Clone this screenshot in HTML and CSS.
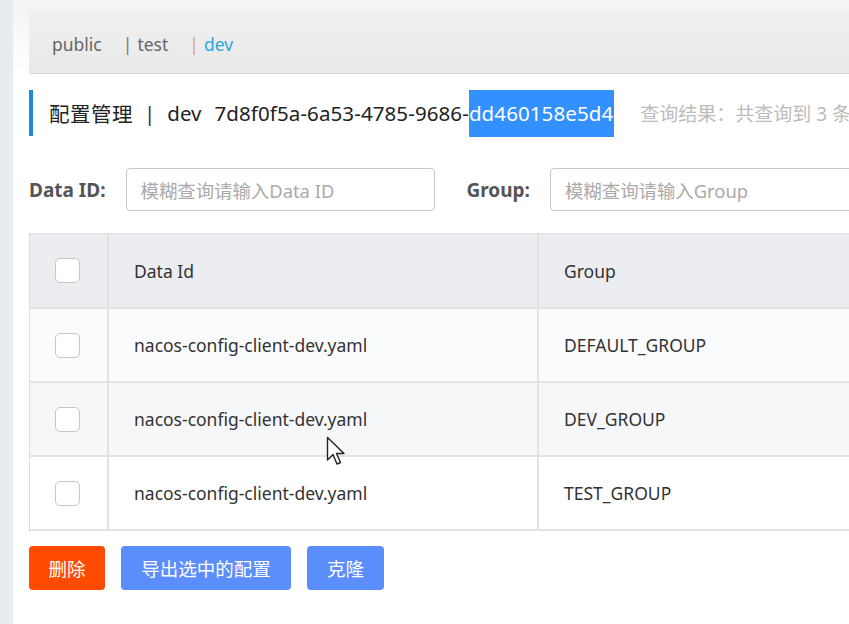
FILE: index.html
```html
<!DOCTYPE html>
<html lang="zh">
<head>
<meta charset="utf-8">
<title>配置管理</title>
<link rel="stylesheet" href="styles.css">
</head>
<body>
<div class="layout">
  <aside class="sidebar"></aside>
  <main class="main">
    <div class="ns-bar">
      <span class="ns-item">public</span>
      <span class="ns-item"><span class="sep">|</span>test</span>
      <span class="ns-item active"><span class="sep sep-active">|</span>dev</span>
    </div>

    <div class="page-title">
      <span class="title-main">配置管理</span>
      <span class="title-sep">|</span>
      <span class="title-ns">dev</span>
      <span class="title-id">7d8f0f5a-6a53-4785-9686-<span class="selected">dd460158e5d4</span></span>
      <span class="title-count">查询结果：共查询到 3 条</span>
    </div>

    <div class="search-row">
      <label class="field-label">Data ID:</label>
      <div class="input input-dataid">模糊查询请输入Data ID</div>
      <label class="field-label group-label">Group:</label>
      <div class="input input-group">模糊查询请输入Group</div>
    </div>

    <div class="table">
      <div class="row head">
        <div class="cell c-check"><span class="checkbox"></span></div>
        <div class="cell c-id">Data Id</div>
        <div class="cell c-group">Group</div>
      </div>
      <div class="row r1">
        <div class="cell c-check"><span class="checkbox"></span></div>
        <div class="cell c-id">nacos-config-client-dev.yaml</div>
        <div class="cell c-group">DEFAULT_GROUP</div>
      </div>
      <div class="row r2">
        <div class="cell c-check"><span class="checkbox"></span></div>
        <div class="cell c-id">nacos-config-client-dev.yaml</div>
        <div class="cell c-group">DEV_GROUP</div>
      </div>
      <div class="row r3">
        <div class="cell c-check"><span class="checkbox"></span></div>
        <div class="cell c-id">nacos-config-client-dev.yaml</div>
        <div class="cell c-group">TEST_GROUP</div>
      </div>
      <svg class="cursor" width="22" height="32" viewBox="0 0 22 32">
        <path d="M1.5 1.5 L1.5 24 L7 18.5 L11 28 L14.5 26.5 L10.5 17.5 L18 17.5 Z" fill="#fff" stroke="#222" stroke-width="1.4" stroke-linejoin="round"/>
      </svg>
    </div>

    <div class="actions">
      <button class="btn btn-danger">删除</button>
      <button class="btn btn-primary">导出选中的配置</button>
      <button class="btn btn-primary btn-clone">克隆</button>
    </div>
  </main>
</div>
</body>
</html>
```

FILE: styles.css
```css
* { box-sizing: border-box; }
html, body {
  margin: 0;
  padding: 0;
  width: 849px;
  height: 624px;
  overflow: hidden;
  background: #fbfbfb;
  font-family: "Noto Sans", "Open Sans", "Noto Sans CJK SC", sans-serif;
  color: #333;
}
.layout {
  display: flex;
  height: 624px;
  overflow: hidden;
}
.sidebar {
  width: 13px;
  flex: none;
  background: #e8ebef;
}
.main {
  flex: 1;
  padding: 10px 0 0 16px;
  background: linear-gradient(#f5f5f5 0, #f5f5f5 10px, #ffffff 74px);
  min-width: 0;
  overflow: hidden;
}
.ns-bar {
  height: 64px;
  background: linear-gradient(#f0f0f0, #e9e9e9);
  border-bottom: 1px solid #d6d6d6;
  display: flex;
  align-items: center;
  padding: 5px 0 0 23px;
  font-size: 17.5px;
  color: #666;
}
.ns-item { margin-right: 21px; }
.sep { color: #777; margin-right: 5px; }
.sep-active { color: #d89f8c; }
.ns-item.active { color: #2fa6dc; }

.page-title {
  margin-top: 16px;
  height: 46px;
  border-left: 4px solid #1a8ccf;
  display: flex;
  align-items: center;
  padding-left: 16px;
  font-size: 20.5px;
  color: #222;
  white-space: nowrap;
}
.title-main { letter-spacing: 0.5px; }
.title-sep { margin: 0 12px 0 11px; color: #333; }
.title-ns { margin-right: 13px; }
.title-id { letter-spacing: 0.1px; }
.selected {
  background: #3390ff;
  color: #fff;
  display: inline-block;
  line-height: 47px;
  padding-right: 1px;
}
.title-count {
  margin-left: 26px;
  font-size: 19px;
  color: #bbb;
}

.search-row {
  margin-top: 32px;
  display: flex;
  align-items: center;
  height: 43px;
  white-space: nowrap;
}
.field-label {
  flex: none;
  font-size: 19px;
  font-weight: bold;
  color: #555;
  margin-right: 20px;
}
.group-label { margin-left: 32px; margin-right: 20px; }
.input {
  flex: none;
  height: 43px;
  border: 1px solid #c9c9c9;
  border-radius: 4px;
  background: #fff;
  display: flex;
  align-items: center;
  padding-left: 14px;
  font-size: 18.4px;
  color: #aaa;
}
.input-dataid { width: 309px; }
.input-group { width: 320px; }

.table {
  position: relative;
  margin-top: 22px;
  width: 900px;
  border-left: 1px solid #dcdcdc;
  border-top: 1px solid #dcdcdc;
}
.row {
  display: flex;
  height: 74px;
  border-bottom: 2px solid #e2e2e2;
}
.row.head { background: #ebedf0; height: 75px; }
.row.r1 { background: #fafbfc; }
.row.r2 { background: #f6f7f9; }
.row.r3 { background: #fff; }
.cell {
  display: flex;
  align-items: center;
  font-size: 17.5px;
  color: #333;
  border-right: 2px solid #e2e2e2;
  white-space: nowrap;
}
.c-check { width: 79px; justify-content: center; padding-right: 3px; }
.c-id { width: 430px; padding-left: 25px; }
.c-group { flex: 1; padding-left: 25px; border-right: none; }
.checkbox {
  width: 25px;
  height: 25px;
  border: 1.5px solid #c6c6c6;
  border-radius: 5px;
  background: #fff;
}
.cursor {
  position: absolute;
  left: 296px;
  top: 202px;
}

.actions {
  margin-top: 15px;
  display: flex;
  gap: 16px;
}
.btn {
  flex: none;
  height: 44px;
  border: none;
  border-radius: 4px;
  color: #fff;
  font-family: "Noto Sans CJK SC", sans-serif;
  font-size: 18.5px;
  padding: 0;
}
.btn-danger { background: #ff4a00; width: 76px; }
.btn-primary { background: #5b8dfb; width: 170px; }
.btn-clone { width: 77px; }
```
